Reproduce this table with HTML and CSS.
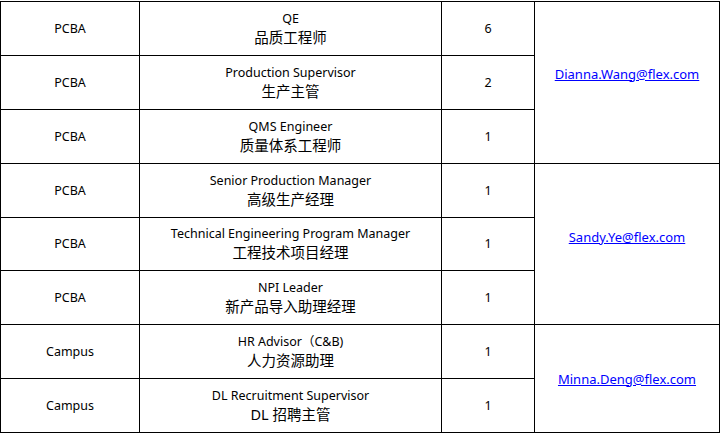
FILE: index.html
```html
<!DOCTYPE html>
<html lang="zh-CN">
<head>
<meta charset="utf-8">
<title>Positions</title>
<link rel="stylesheet" href="styles.css">
</head>
<body>
<div class="sheet">
  <div class="cell r1 c1">PCBA</div>
  <div class="cell r1 c2"><span class="en">QE</span><span class="zh">品质工程师</span></div>
  <div class="cell r1 c3">6</div>
  <div class="cell mail m1"><a href="#">Dianna.Wang@flex.com</a></div>

  <div class="cell r2 c1">PCBA</div>
  <div class="cell r2 c2"><span class="en">Production Supervisor</span><span class="zh">生产主管</span></div>
  <div class="cell r2 c3">2</div>

  <div class="cell r3 c1">PCBA</div>
  <div class="cell r3 c2"><span class="en">QMS Engineer</span><span class="zh">质量体系工程师</span></div>
  <div class="cell r3 c3">1</div>

  <div class="cell r4 c1">PCBA</div>
  <div class="cell r4 c2"><span class="en">Senior Production Manager</span><span class="zh">高级生产经理</span></div>
  <div class="cell r4 c3">1</div>
  <div class="cell mail m2"><a href="#">Sandy.Ye@flex.com</a></div>

  <div class="cell r5 c1">PCBA</div>
  <div class="cell r5 c2"><span class="en">Technical Engineering Program Manager</span><span class="zh">工程技术项目经理</span></div>
  <div class="cell r5 c3">1</div>

  <div class="cell r6 c1">PCBA</div>
  <div class="cell r6 c2"><span class="en">NPI Leader</span><span class="zh">新产品导入助理经理</span></div>
  <div class="cell r6 c3">1</div>

  <div class="cell r7 c1">Campus</div>
  <div class="cell r7 c2"><span class="en">HR Advisor（C&amp;B)</span><span class="zh">人力资源助理</span></div>
  <div class="cell r7 c3">1</div>
  <div class="cell mail m3"><a href="#">Minna.Deng@flex.com</a></div>

  <div class="cell r8 c1">Campus</div>
  <div class="cell r8 c2"><span class="en">DL Recruitment Supervisor</span><span class="zh">DL 招聘主管</span></div>
  <div class="cell r8 c3">1</div>
</div>
</body>
</html>
```

FILE: styles.css
```css
html, body {
  margin: 0;
  padding: 0;
  background: #fff;
}
body {
  font-family: "Noto Sans", "Noto Sans CJK SC", sans-serif;
  font-size: 12.5px;
  color: #000;
}
.sheet {
  margin-top: 1px;
  width: 720px;
  box-sizing: border-box;
  display: grid;
  grid-template-columns: 139px 302px 93px 185px;
  grid-template-rows: 54px 54px 54px 54px 53px 54px 54px 54px;
  border-left: 1px solid #000;
  border-top: 1px solid #000;
}
.cell {
  box-sizing: border-box;
  border-right: 1px solid #000;
  border-bottom: 1px solid #000;
  display: flex;
  flex-direction: column;
  align-items: center;
  justify-content: center;
  text-align: center;
  line-height: 20px;
}
.c1 { grid-column: 1; }
.c2 { grid-column: 2; padding-bottom: 2px; }
.c3 { grid-column: 3; }
.r1 { grid-row: 1; }
.r2 { grid-row: 2; }
.r3 { grid-row: 3; }
.r4 { grid-row: 4; }
.r5 { grid-row: 5; }
.r6 { grid-row: 6; }
.r7 { grid-row: 7; }
.r8 { grid-row: 8; }
.mail { grid-column: 4; font-size: 13px; }
.m1 { grid-row: 1 / span 3; padding-bottom: 18px; }
.m2 { grid-row: 4 / span 3; padding-bottom: 14px; }
.m3 { grid-row: 7 / span 2; }
.en, .zh { display: block; }
.zh { font-size: 14.5px; margin-top: -2px; }
.mail a {
  color: #0000ff;
  text-decoration: underline;
}
```
